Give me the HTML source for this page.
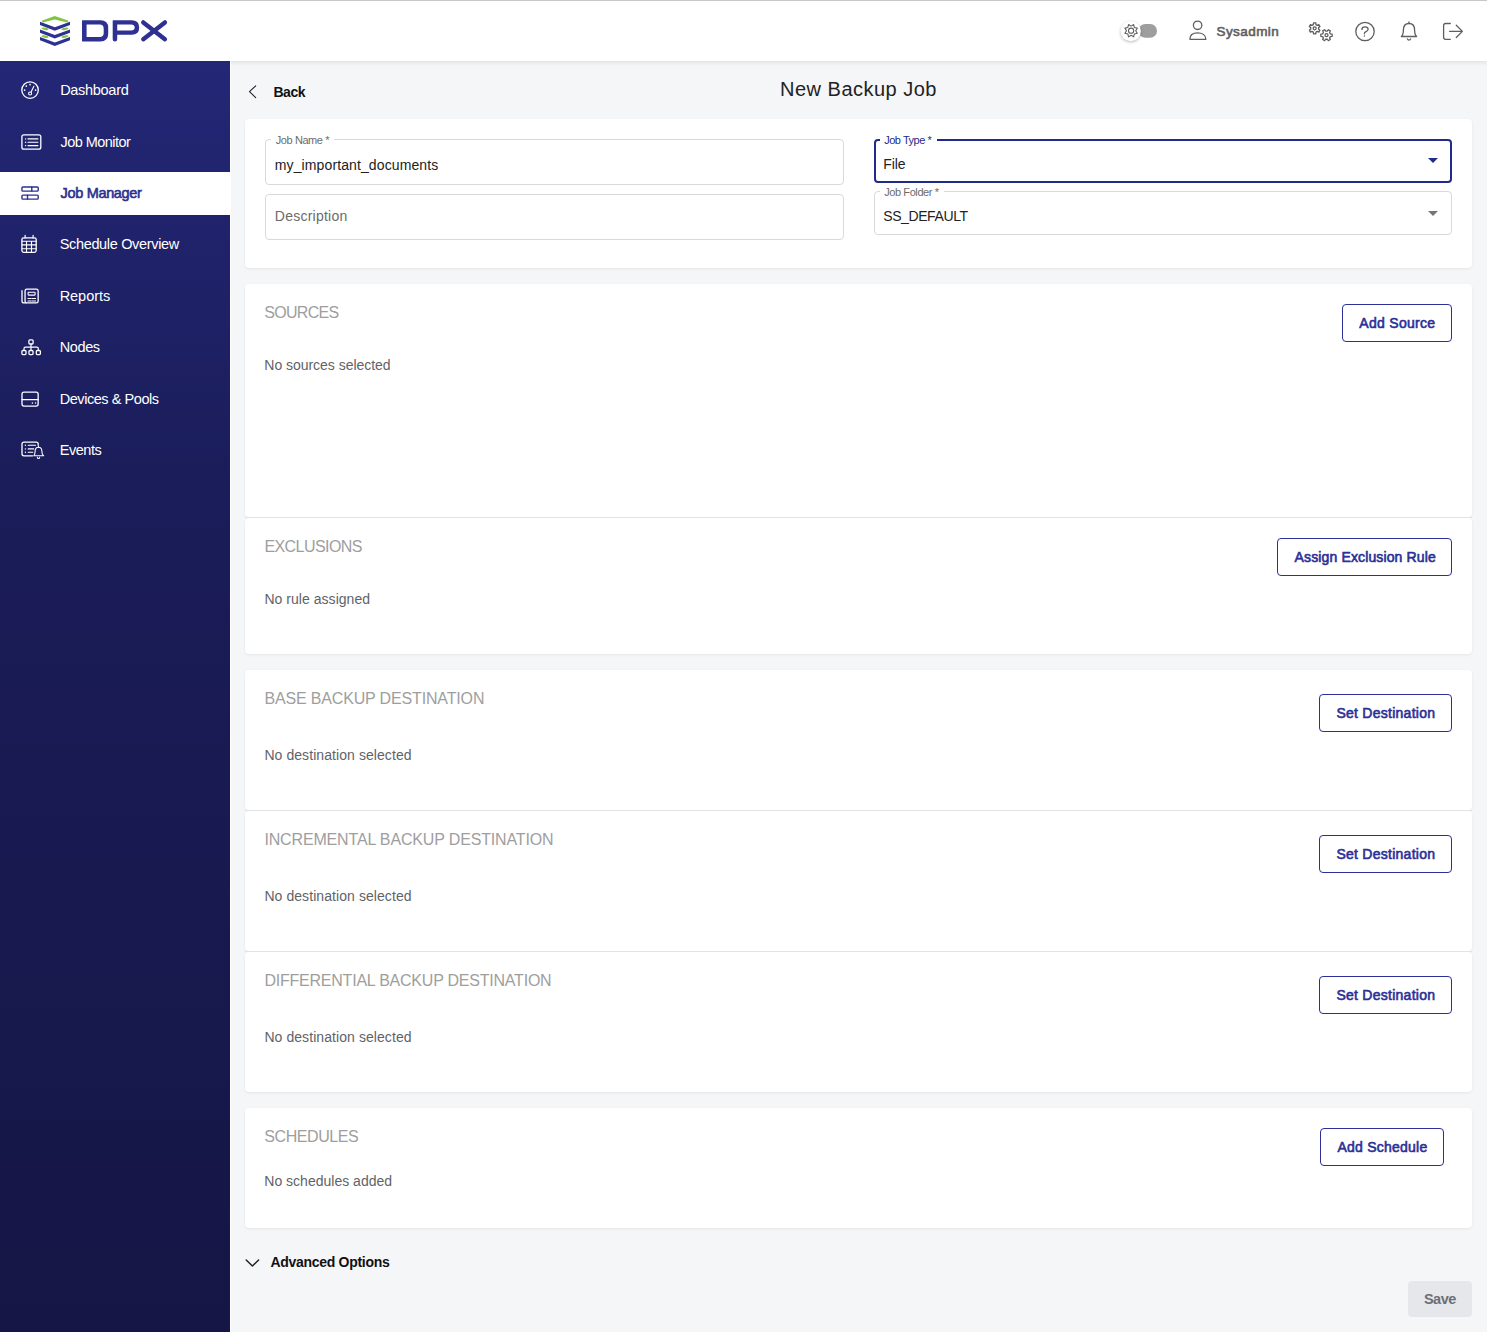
<!DOCTYPE html>
<html>
<head>
<meta charset="utf-8">
<title>DPX - New Backup Job</title>
<style>
html, body { margin: 0; padding: 0; }
body { width: 1487px; height: 1332px; position: relative; overflow: hidden; background: #f5f6f8; font-family: "Liberation Sans", sans-serif; }
.a { position: absolute; box-sizing: border-box; }
.t { position: absolute; white-space: nowrap; font-family: "Liberation Sans", sans-serif; }
svg { position: absolute; overflow: visible; }
.card { position: absolute; background: #fff; border-radius: 4px; box-shadow: 0 1px 3px rgba(0,0,0,0.07); }
.fld { position: absolute; box-sizing: border-box; border: 1px solid #d9d9d9; border-radius: 4px; background: #fff; }
.btn { position: absolute; box-sizing: border-box; border: 1px solid #2b2f96; border-radius: 4px; background: #fff; }
</style>
</head>
<body>
<!-- header -->
<div class="a" style="left:0;top:0;width:1487px;height:61px;background:#fff"></div>
<div class="a" style="left:0;top:0;width:1487px;height:1px;background:#c8c8c8"></div>
<!-- header shadow over content -->
<div class="a" style="left:231px;top:61px;width:1256px;height:5px;background:linear-gradient(rgba(0,0,0,0.065),rgba(0,0,0,0))"></div>

<!-- logo -->
<svg width="1487" height="61" style="left:0;top:0" viewBox="0 0 1487 61">
  <g fill="#2e3192">
    <polygon points="40,21.8 54.8,27.3 70,21.8 70,25 54.8,30.8 40,25"/>
    <polygon points="40,29.5 54.8,35 70,29.5 70,32.7 54.8,38.5 40,32.7"/>
    <polygon points="40,37.1 54.8,42.6 70,37.1 70,40.3 54.8,46 40,40.3"/>
  </g>
  <g fill="#80c443">
    <polygon points="41.5,20.8 54.8,15.9 68.6,20.8 67.2,22.6 54.8,19.6 42.8,22.6"/>
    <ellipse cx="45" cy="28.9" rx="3.5" ry="1.1" transform="rotate(10 45 28.9)"/>
    <ellipse cx="65" cy="28.9" rx="3.5" ry="1.1" transform="rotate(-10 65 28.9)"/>
    <ellipse cx="45" cy="36.6" rx="3.5" ry="1.1" transform="rotate(10 45 36.6)"/>
    <ellipse cx="65" cy="36.6" rx="3.5" ry="1.1" transform="rotate(-10 65 36.6)"/>
  </g>
  <g fill="#2e3192" fill-rule="evenodd">
    <path d="M82.6,20.2 H100.5 Q108.2,20.2 108.2,27.8 V33.8 Q108.2,41.4 100.5,41.4 H82.6 Q82,41.4 82,40.8 V20.8 Q82,20.2 82.6,20.2 Z M86.6,24.6 V37 H99.6 Q103.7,37 103.7,32.9 V28.7 Q103.7,24.6 99.6,24.6 Z"/>
    <path d="M113.3,20.2 H131.6 Q139.2,20.2 139.2,27.5 Q139.2,34.8 131.6,34.8 H117.2 V39.2 Q117.2,41.4 115,41.4 Q112.7,41.4 112.7,39.2 V20.8 Q112.7,20.2 113.3,20.2 Z M117.2,24.6 V30.4 H131 Q134.7,30.4 134.7,27.5 Q134.7,24.6 131,24.6 Z"/>
  </g>
  <g stroke="#2e3192" stroke-width="4.4" stroke-linecap="round">
    <line x1="143.3" y1="22.4" x2="164.9" y2="39.2"/>
    <line x1="164.9" y1="22.4" x2="143.3" y2="39.2"/>
  </g>
</svg>

<!-- header right icons -->
<svg width="1487" height="61" style="left:0;top:0" viewBox="0 0 1487 61" fill="none" stroke="#5f5f5f" stroke-width="1.3" stroke-linecap="round" stroke-linejoin="round">
  <rect x="1138.5" y="24.1" width="18.5" height="13.6" rx="6.8" fill="#9e9e9e" stroke="none"/>
  <circle cx="1130.7" cy="31.1" r="10.2" fill="#fff" stroke="none" style="filter:drop-shadow(0 1px 1.5px rgba(0,0,0,0.28))"/>
  <path d="M1128.54,24.51 L1131.10,26.10 L1133.66,24.51 L1134.35,27.45 L1137.29,28.14 L1135.70,30.70 L1137.29,33.26 L1134.35,33.95 L1133.66,36.89 L1131.10,35.30 L1128.54,36.89 L1127.85,33.95 L1124.91,33.26 L1126.50,30.70 L1124.91,28.14 L1127.85,27.45 Z" stroke-width="1.1"/>
  <circle cx="1131.1" cy="30.7" r="2.6" stroke-width="1.1"/>
  <!-- user -->
  <circle cx="1197.6" cy="25.3" r="4.2"/>
  <path d="M1189.9,39.3 C1189.9,35 1193.2,32.9 1197.6,32.9 C1202,32.9 1205.9,35 1205.9,39.3 Z"/>
  <!-- gears -->
  <path d="M1313.33,24.58 L1313.54,22.87 L1315.76,22.87 L1315.97,24.58 L1317.26,25.33 L1318.85,24.66 L1319.96,26.57 L1318.58,27.61 L1318.58,29.11 L1319.96,30.15 L1318.85,32.06 L1317.26,31.39 L1315.97,32.14 L1315.76,33.85 L1313.54,33.85 L1313.33,32.14 L1312.04,31.39 L1310.45,32.06 L1309.34,30.15 L1310.72,29.11 L1310.72,27.61 L1309.34,26.57 L1310.45,24.66 L1312.04,25.33 Z"/>
  <circle cx="1314.65" cy="28.36" r="1.5"/>
  <path d="M1327.27,31.17 L1328.35,29.70 L1330.34,30.85 L1329.60,32.52 L1330.37,33.85 L1332.19,34.05 L1332.19,36.35 L1330.37,36.55 L1329.60,37.88 L1330.34,39.55 L1328.35,40.70 L1327.27,39.23 L1325.73,39.23 L1324.65,40.70 L1322.66,39.55 L1323.40,37.88 L1322.63,36.55 L1320.81,36.35 L1320.81,34.05 L1322.63,33.85 L1323.40,32.52 L1322.66,30.85 L1324.65,29.70 L1325.73,31.17 Z"/>
  <circle cx="1326.5" cy="35.2" r="1.5"/>
  <!-- help -->
  <circle cx="1365" cy="31.5" r="9.2"/>
  <path d="M1361.9,29.4 C1361.9,27.6 1363.2,26.9 1365,26.9 C1366.9,26.9 1368.1,27.9 1368.1,29.3 C1368.1,30.9 1366.6,31.3 1365.5,31.9 C1364.6,32.4 1364.4,33 1364.4,33.8" stroke-width="1.3"/>
  <circle cx="1364.4" cy="35.9" r="0.75" fill="#616161" stroke="none"/>
  <!-- bell -->
  <path d="M1409,21.9 V23.4"/>
  <path d="M1401.4,36.5 C1403.1,35 1403.4,33 1403.4,30 C1403.4,26 1405.6,23.5 1409,23.5 C1412.4,23.5 1414.6,26 1414.6,30 C1414.6,33 1414.9,35 1416.6,36.5 Z"/>
  <path d="M1407.4,38.9 A1.7,1.7 0 0 0 1410.6,38.9"/>
  <!-- logout -->
  <path d="M1450.3,23.5 H1445.6 Q1443.6,23.5 1443.6,25.5 V37.3 Q1443.6,39.3 1445.6,39.3 H1450.3" stroke-width="1.3"/>
  <path d="M1449.6,31.4 H1462.3 M1456.3,25.3 L1462.4,31.4 L1456.3,37.5" stroke-width="1.3"/>
</svg>

<!-- sidebar -->
<div class="a" style="left:0;top:61px;width:230px;height:1271px;background:linear-gradient(180deg,#232776 0%,#1b1d5a 33%,#18194f 65%,#151645 100%)"></div>
<div class="a" style="left:230px;top:61px;width:1px;height:1271px;background:#ffffff"></div>
<div class="a" style="left:0;top:172px;width:230px;height:43px;background:#fff"></div>

<svg width="231" height="500" style="left:0;top:0" viewBox="0 0 231 500" fill="none" stroke="#fff" stroke-width="1.3" stroke-linecap="round" stroke-linejoin="round">
  <!-- dashboard -->
  <circle cx="30.06" cy="90.06" r="8.25"/>
  <g fill="#fff" stroke="none">
    <circle cx="26.3" cy="86.1" r="0.85"/><circle cx="30.06" cy="84.6" r="0.85"/>
    <circle cx="24.6" cy="90.06" r="0.85"/><circle cx="35.6" cy="90.06" r="0.85"/>
  </g>
  <path d="M33.9,86.2 L31.1,92" stroke-width="1.1"/>
  <circle cx="30.1" cy="93.5" r="1.5" stroke-width="1.1"/>
  <!-- job monitor -->
  <rect x="21.9" y="134.8" width="18.9" height="14.4" rx="2"/>
  <path d="M28,138.9 H37.9 M28,142.2 H37.9 M28,145.6 H37.9" stroke-width="1.1"/>
  <g fill="#fff" stroke="none"><circle cx="25.6" cy="138.9" r="0.7"/><circle cx="25.6" cy="142.2" r="0.7"/><circle cx="25.6" cy="145.6" r="0.7"/></g>
  <!-- job manager -->
  <g stroke="#2b2f96" stroke-width="1.4">
    <rect x="21.95" y="186.95" width="16.25" height="4.2" rx="0.9"/>
    <path d="M31.8,187 V191.1"/>
    <rect x="21.95" y="195.1" width="16.25" height="4.0" rx="0.9"/>
    <path d="M27.5,195.1 V199.1"/>
  </g>
  <!-- schedule -->
  <rect x="21.9" y="237.8" width="14.3" height="14.6" rx="1.8"/>
  <path d="M25.1,235.3 V238 M33.1,235.3 V238" stroke-width="1.2"/>
  <path d="M22,241.2 H36.1 M22,244.9 H36.1 M22,248.8 H36.1 M26.5,241.2 V252.3 M31.5,241.2 V252.3" stroke-width="1.1"/>
  <!-- reports -->
  <rect x="25.05" y="289.15" width="13.1" height="13.8" rx="1.8"/>
  <path d="M22,290.6 V301.2 Q22,302.9 24,302.9 H26"/>
  <rect x="28.1" y="292.2" width="7" height="2.9" rx="0.6" stroke-width="1.1"/>
  <path d="M28,298.5 H31.3 M32.3,298.5 H35.6 M28,301 H31.3 M32.3,301 H35.6" stroke-width="1"/>
  <!-- nodes -->
  <rect x="28.9" y="339.8" width="4.2" height="4.2" rx="1"/>
  <path d="M31,344 V350.5 M24,350.5 V348.6 Q24,347.2 25.4,347.2 H36.8 Q38.3,347.2 38.3,348.6 V350.5" stroke-width="1.2"/>
  <rect x="21.9" y="350.5" width="4.1" height="4.1" rx="1"/>
  <rect x="28.95" y="350.5" width="4.1" height="4.1" rx="1"/>
  <rect x="36.3" y="350.5" width="4.1" height="4.1" rx="1"/>
  <!-- devices -->
  <rect x="22" y="392.15" width="16.15" height="13.9" rx="2"/>
  <path d="M22,399.65 H38.1"/>
  <g fill="#fff" stroke="none"><circle cx="32.4" cy="403" r="0.8"/><circle cx="35.6" cy="403" r="0.8"/></g>
  <!-- events -->
  <path d="M32.5,455.8 H24 Q22,455.8 22,453.8 V444.1 Q22,442.1 24,442.1 H36.2 Q38.2,442.1 38.2,444.1 V445.3"/>
  <path d="M28.2,445.2 H35.5 M28.2,448.9 H33.7 M28.2,452.3 H32.8" stroke-width="1.1"/>
  <g fill="#fff" stroke="none"><circle cx="25.4" cy="445.2" r="0.7"/><circle cx="25.4" cy="448.9" r="0.7"/><circle cx="25.4" cy="452.3" r="0.7"/></g>
  <path d="M33.8,455.8 C35,454.8 35.1,453.3 35.1,451.5 C35.1,448.9 36.5,447.3 38.5,447.3 C40.5,447.3 41.9,448.9 41.9,451.5 C41.9,453.3 42,454.8 43.6,455.8 Z" stroke-width="1.1"/>
  <path d="M38.5,446.3 V447.2 M37.4,457.4 A1.1,1.1 0 0 0 39.6,457.4" stroke-width="1.1"/>
</svg>

<!-- back chevron -->
<svg width="30" height="30" style="left:240px;top:77px" viewBox="240 77 30 30" fill="none" stroke="#1a1a2a" stroke-width="1.05" stroke-linecap="round" stroke-linejoin="round">
  <path d="M255.7,85.8 L249.5,91.7 L255.7,97.6"/>
</svg>

<!-- card 1 -->
<div class="card" style="left:245px;top:119px;width:1227px;height:149px"></div>
<div class="fld" style="left:265px;top:139px;width:579px;height:46px"></div>
<div class="a" style="left:271px;top:137px;width:63px;height:4px;background:#fff"></div>
<div class="fld" style="left:265px;top:194px;width:579px;height:46px"></div>
<div class="fld" style="left:874px;top:139px;width:578px;height:44px;border:2px solid #202a8a"></div>
<div class="a" style="left:879.5px;top:137px;width:57px;height:5px;background:#fff"></div>
<div class="fld" style="left:874px;top:191px;width:578px;height:44px"></div>
<div class="a" style="left:879.5px;top:189px;width:64px;height:4px;background:#fff"></div>
<svg width="20" height="10" style="left:1423px;top:155px" viewBox="1423 155 20 10"><polygon points="1428,158 1438,158 1433,163" fill="#202a8a"/></svg>
<svg width="20" height="10" style="left:1423px;top:208px" viewBox="1423 208 20 10"><polygon points="1428,211 1438,211 1433,216" fill="#757575"/></svg>

<!-- section cards -->
<div class="card" style="left:245px;top:284px;width:1227px;height:233px"></div>
<div class="card" style="left:245px;top:518px;width:1227px;height:136px"></div>
<div class="a" style="left:245px;top:517px;width:1227px;height:1px;background:#e2e3e5"></div>

<div class="card" style="left:245px;top:670px;width:1227px;height:140px"></div>
<div class="card" style="left:245px;top:811px;width:1227px;height:140px"></div>
<div class="card" style="left:245px;top:952px;width:1227px;height:140px"></div>
<div class="a" style="left:245px;top:810px;width:1227px;height:1px;background:#e2e3e5"></div>
<div class="a" style="left:245px;top:951px;width:1227px;height:1px;background:#e2e3e5"></div>

<div class="card" style="left:245px;top:1108px;width:1227px;height:120px"></div>

<!-- buttons -->
<div class="btn" style="left:1342px;top:304px;width:110px;height:38px"></div>
<div class="btn" style="left:1277px;top:538px;width:175px;height:38px"></div>
<div class="btn" style="left:1319px;top:694px;width:133px;height:38px"></div>
<div class="btn" style="left:1319px;top:835px;width:133px;height:38px"></div>
<div class="btn" style="left:1319px;top:976px;width:133px;height:38px"></div>
<div class="btn" style="left:1320px;top:1128px;width:124px;height:38px"></div>
<div class="a" style="left:1408px;top:1281px;width:64px;height:36px;background:#e5e7eb;border-radius:4px"></div>

<!-- advanced chevron -->
<svg width="20" height="14" style="left:243px;top:1256px" viewBox="243 1256 20 14" fill="none" stroke="#222" stroke-width="1.5" stroke-linecap="round" stroke-linejoin="round">
  <path d="M246.2,1260 L252.4,1266 L258.6,1260"/>
</svg>

<div class="t" style="left:60.20px;top:83.40px;font-size:14.5px;line-height:14.5px;font-weight:400;color:#ffffff;letter-spacing:-0.300px">Dashboard</div>
<div class="t" style="left:60.50px;top:134.75px;font-size:14.5px;line-height:14.5px;font-weight:400;color:#ffffff;letter-spacing:-0.540px">Job Monitor</div>
<div class="t" style="left:60.50px;top:185.90px;font-size:14.5px;line-height:14.5px;font-weight:400;-webkit-text-stroke:0.6px #2c3190;color:#2c3190;letter-spacing:-0.320px">Job Manager</div>
<div class="t" style="left:59.70px;top:236.90px;font-size:14.5px;line-height:14.5px;font-weight:400;color:#ffffff;letter-spacing:-0.337px">Schedule Overview</div>
<div class="t" style="left:59.70px;top:288.80px;font-size:14.5px;line-height:14.5px;font-weight:400;color:#ffffff;letter-spacing:-0.050px">Reports</div>
<div class="t" style="left:59.70px;top:339.90px;font-size:14.5px;line-height:14.5px;font-weight:400;color:#ffffff;letter-spacing:-0.375px">Nodes</div>
<div class="t" style="left:59.70px;top:391.80px;font-size:14.5px;line-height:14.5px;font-weight:400;color:#ffffff;letter-spacing:-0.443px">Devices &amp; Pools</div>
<div class="t" style="left:59.70px;top:442.90px;font-size:14.5px;line-height:14.5px;font-weight:400;color:#ffffff;letter-spacing:-0.440px">Events</div>
<div class="t" style="left:1216.50px;top:25.00px;font-size:13.5px;line-height:13.5px;font-weight:400;-webkit-text-stroke:0.6px #606060;color:#606060;letter-spacing:0.429px">Sysadmin</div>
<div class="t" style="left:273.40px;top:84.90px;font-size:14px;line-height:14px;font-weight:700;color:#111111;letter-spacing:-0.433px">Back</div>
<div class="t" style="left:780.10px;top:78.80px;font-size:20px;line-height:20px;font-weight:400;color:#222222;letter-spacing:0.477px">New Backup Job</div>
<div class="t" style="left:275.80px;top:134.80px;font-size:11px;line-height:11px;font-weight:400;color:#6b6b6b;letter-spacing:-0.422px">Job Name *</div>
<div class="t" style="left:274.80px;top:157.70px;font-size:14px;line-height:14px;font-weight:400;color:#222222;letter-spacing:0.114px">my_important_documents</div>
<div class="t" style="left:274.80px;top:209.20px;font-size:14px;line-height:14px;font-weight:400;color:#6b6b6b;letter-spacing:0.240px">Description</div>
<div class="t" style="left:884.20px;top:135.10px;font-size:11px;line-height:11px;font-weight:400;color:#1f2a8a;letter-spacing:-0.467px">Job Type *</div>
<div class="t" style="left:883.20px;top:156.70px;font-size:14px;line-height:14px;font-weight:400;color:#222222;letter-spacing:-0.067px">File</div>
<div class="t" style="left:884.20px;top:186.60px;font-size:11px;line-height:11px;font-weight:400;color:#6b6b6b;letter-spacing:-0.409px">Job Folder *</div>
<div class="t" style="left:883.20px;top:208.80px;font-size:14px;line-height:14px;font-weight:400;color:#222222;letter-spacing:-0.400px">SS_DEFAULT</div>
<div class="t" style="left:264.30px;top:304.90px;font-size:16px;line-height:16px;font-weight:400;color:#9e9e9e;letter-spacing:-0.717px">SOURCES</div>
<div class="t" style="left:264.30px;top:357.60px;font-size:14px;line-height:14px;font-weight:400;color:#5f6368;letter-spacing:-0.028px">No sources selected</div>
<div class="t" style="left:264.40px;top:539.00px;font-size:16px;line-height:16px;font-weight:400;color:#9e9e9e;letter-spacing:-0.556px">EXCLUSIONS</div>
<div class="t" style="left:264.40px;top:591.90px;font-size:14px;line-height:14px;font-weight:400;color:#5f6368;letter-spacing:0.040px">No rule assigned</div>
<div class="t" style="left:264.40px;top:691.20px;font-size:16px;line-height:16px;font-weight:400;color:#9e9e9e;letter-spacing:-0.155px">BASE BACKUP DESTINATION</div>
<div class="t" style="left:264.40px;top:748.10px;font-size:14px;line-height:14px;font-weight:400;color:#5f6368;letter-spacing:0.073px">No destination selected</div>
<div class="t" style="left:264.40px;top:832.30px;font-size:16px;line-height:16px;font-weight:400;color:#9e9e9e;letter-spacing:-0.155px">INCREMENTAL BACKUP DESTINATION</div>
<div class="t" style="left:264.40px;top:889.20px;font-size:14px;line-height:14px;font-weight:400;color:#5f6368;letter-spacing:0.073px">No destination selected</div>
<div class="t" style="left:264.40px;top:973.40px;font-size:16px;line-height:16px;font-weight:400;color:#9e9e9e;letter-spacing:-0.223px">DIFFERENTIAL BACKUP DESTINATION</div>
<div class="t" style="left:264.40px;top:1030.10px;font-size:14px;line-height:14px;font-weight:400;color:#5f6368;letter-spacing:0.073px">No destination selected</div>
<div class="t" style="left:264.30px;top:1128.90px;font-size:16px;line-height:16px;font-weight:400;color:#9e9e9e;letter-spacing:-0.425px">SCHEDULES</div>
<div class="t" style="left:264.30px;top:1173.80px;font-size:14px;line-height:14px;font-weight:400;color:#5f6368;letter-spacing:0.006px">No schedules added</div>
<div class="t" style="left:270.40px;top:1254.90px;font-size:14px;line-height:14px;font-weight:700;color:#111111;letter-spacing:-0.287px">Advanced Options</div>
<div class="t" style="left:1359.30px;top:315.80px;font-size:14px;line-height:14px;font-weight:400;-webkit-text-stroke:0.6px #2b2f96;color:#2b2f96;letter-spacing:0.289px">Add Source</div>
<div class="t" style="left:1294.60px;top:550.30px;font-size:14px;line-height:14px;font-weight:400;-webkit-text-stroke:0.6px #2b2f96;color:#2b2f96;letter-spacing:0.130px">Assign Exclusion Rule</div>
<div class="t" style="left:1336.40px;top:705.80px;font-size:14px;line-height:14px;font-weight:400;-webkit-text-stroke:0.6px #2b2f96;color:#2b2f96;letter-spacing:0.264px">Set Destination</div>
<div class="t" style="left:1336.40px;top:846.80px;font-size:14px;line-height:14px;font-weight:400;-webkit-text-stroke:0.6px #2b2f96;color:#2b2f96;letter-spacing:0.264px">Set Destination</div>
<div class="t" style="left:1336.40px;top:987.80px;font-size:14px;line-height:14px;font-weight:400;-webkit-text-stroke:0.6px #2b2f96;color:#2b2f96;letter-spacing:0.264px">Set Destination</div>
<div class="t" style="left:1337.40px;top:1139.80px;font-size:14px;line-height:14px;font-weight:400;-webkit-text-stroke:0.6px #2b2f96;color:#2b2f96;letter-spacing:0.236px">Add Schedule</div>
<div class="t" style="left:1423.90px;top:1292.10px;font-size:14.5px;line-height:14.5px;font-weight:700;color:#6b6f73;letter-spacing:-0.500px">Save</div>
</body>
</html>
